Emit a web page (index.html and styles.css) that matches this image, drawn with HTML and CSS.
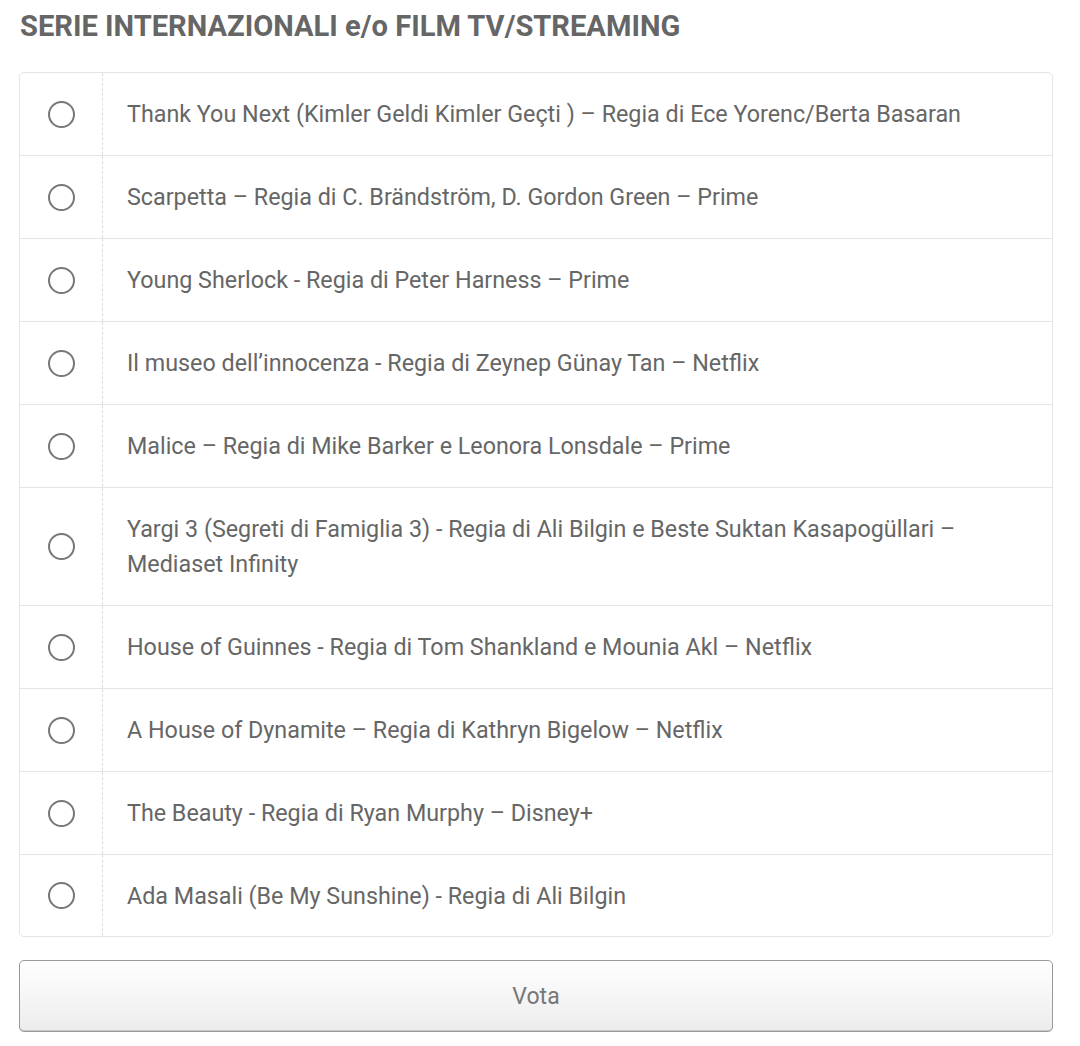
FILE: index.html
```html
<!DOCTYPE html>
<html lang="it">
<head>
<meta charset="utf-8">
<link rel="stylesheet" href="styles.css">
</head>
<body>
<div class="poll">
  <h2 class="title">SERIE INTERNAZIONALI e/o FILM TV/STREAMING</h2>
  <div class="card">
    <label class="row"><span class="radio-col"><span class="radio"></span></span><span class="label">Thank You Next (Kimler Geldi Kimler Geçti ) – Regia di Ece Yorenc/Berta Basaran</span></label>
    <label class="row"><span class="radio-col"><span class="radio"></span></span><span class="label">Scarpetta – Regia di C. Brändström, D. Gordon Green – Prime</span></label>
    <label class="row"><span class="radio-col"><span class="radio"></span></span><span class="label">Young Sherlock - Regia di Peter Harness – Prime</span></label>
    <label class="row"><span class="radio-col"><span class="radio"></span></span><span class="label">Il museo dell’innocenza - Regia di Zeynep Günay Tan – Netflix</span></label>
    <label class="row"><span class="radio-col"><span class="radio"></span></span><span class="label">Malice – Regia di Mike Barker e Leonora Lonsdale – Prime</span></label>
    <label class="row"><span class="radio-col"><span class="radio"></span></span><span class="label">Yargi 3 (Segreti di Famiglia 3) - Regia di Ali Bilgin e Beste Suktan Kasapogüllari – Mediaset Infinity</span></label>
    <label class="row"><span class="radio-col"><span class="radio"></span></span><span class="label">House of Guinnes - Regia di Tom Shankland e Mounia Akl – Netflix</span></label>
    <label class="row"><span class="radio-col"><span class="radio"></span></span><span class="label">A House of Dynamite – Regia di Kathryn Bigelow – Netflix</span></label>
    <label class="row"><span class="radio-col"><span class="radio"></span></span><span class="label">The Beauty - Regia di Ryan Murphy – Disney+</span></label>
    <label class="row"><span class="radio-col"><span class="radio"></span></span><span class="label">Ada Masali (Be My Sunshine) - Regia di Ali Bilgin</span></label>
  </div>
  <button class="vote">Vota</button>
</div>
</body>
</html>
```
FILE: styles.css
```css
html, body {
  margin: 0;
  padding: 0;
  background: #fff;
}
body {
  font-family: Roboto, "Liberation Sans", sans-serif;
  color: #666;
}
.poll {
  padding: 8px 27px 0 19px;
  display: flex;
  flex-direction: column;
}
.title {
  margin: 0 0 0 1px;
  font-size: 29.1px;
  line-height: 36px;
  font-weight: 700;
  color: #666;
}
.card {
  margin-top: 28px;
  border: 1px solid #e4e4e4;
  border-radius: 5px;
  display: flex;
  flex-direction: column;
}
.row {
  display: flex;
  align-items: stretch;
  border-bottom: 1px solid #e4e4e4;
}
.row:last-child {
  border-bottom: none;
}
.row:last-child .label {
  padding-bottom: 22px;
}
.radio-col {
  flex: 0 0 82px;
  display: flex;
  align-items: center;
  justify-content: center;
  border-right: 1px dashed #dcdcdc;
}
.radio {
  width: 23px;
  height: 23px;
  border: 2px solid #777;
  border-radius: 50%;
}
.label {
  flex: 1;
  padding: 24px 24px 23px 24px;
  font-size: 23.3px;
  line-height: 35px;
  color: #666;
}
.vote {
  margin-top: 23px;
  height: 72px;
  border: 1px solid #9a9a9a;
  border-radius: 5px;
  background: linear-gradient(#ffffff, #ececec);
  box-shadow: inset 0 -1px 0 #c8c8c8;
  font-family: Roboto, "Liberation Sans", sans-serif;
  font-size: 23px;
  color: #777;
}
```
